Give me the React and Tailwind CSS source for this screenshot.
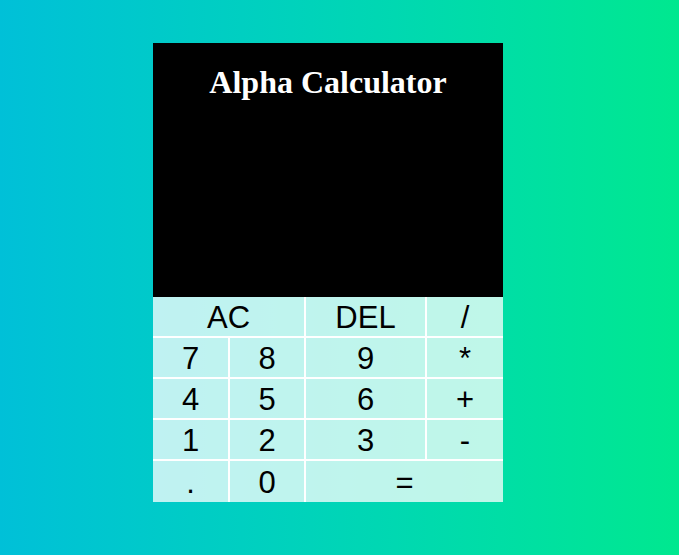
import React, { useState } from "react";

const keys = [
  { label: "AC", span: "col-span-2", border: "border-r-2 border-b-2" },
  { label: "DEL", border: "border-r-2 border-b-2" },
  { label: "/", border: "border-b-2" },
  { label: "7", border: "border-r-2 border-b-2" },
  { label: "8", border: "border-r-2 border-b-2" },
  { label: "9", border: "border-r-2 border-b-2" },
  { label: "*", border: "border-b-2" },
  { label: "4", border: "border-r-2 border-b-2" },
  { label: "5", border: "border-r-2 border-b-2" },
  { label: "6", border: "border-r-2 border-b-2" },
  { label: "+", border: "border-b-2" },
  { label: "1", border: "border-r-2 border-b-2" },
  { label: "2", border: "border-r-2 border-b-2" },
  { label: "3", border: "border-r-2 border-b-2" },
  { label: "-", border: "border-b-2" },
  { label: ".", border: "border-r-2" },
  { label: "0", border: "border-r-2" },
  { label: "=", span: "col-span-2", border: "" },
];

const App = () => {
  const [display, setDisplay] = useState("");

  const press = (k) => {
    if (k === "AC") return setDisplay("");
    if (k === "DEL") return setDisplay(display.slice(0, -1));
    if (k === "=") {
      try {
        // eslint-disable-next-line no-eval
        setDisplay(String(eval(display)));
      } catch (e) {
        setDisplay("Error");
      }
      return;
    }
    setDisplay(display + k);
  };

  return (
    <div className="h-[555px] bg-gradient-to-r from-[#00c0d8] to-[#00e88f] pl-[153px] pt-[43px]">
      <div className="w-[350px]">
        {/* Display */}
        <div className="h-[254px] bg-black pt-[23px] text-center">
          <h1 className="text-[32px] font-bold leading-[32px] text-white font-['Liberation_Serif',serif]">
            Alpha Calculator
          </h1>
          <div className="mt-4 px-3 text-right text-[28px] text-white break-all font-['Liberation_Sans',sans-serif]">
            {display}
          </div>
        </div>

        {/* Keys */}
        <div className="grid grid-cols-[77px_76px_121px_76px] grid-rows-[41px_41px_41px_41px_41px]">
          {keys.map((k) => (
            <button
              key={k.label}
              onClick={() => press(k.label)}
              className={`flex items-center justify-center pt-px ${k.span || ""} ${k.border} border-white bg-white/75 text-[31px] leading-none text-black font-['Liberation_Sans',sans-serif]`}
            >
              {k.label}
            </button>
          ))}
        </div>
      </div>
    </div>
  );
};

export default App;
